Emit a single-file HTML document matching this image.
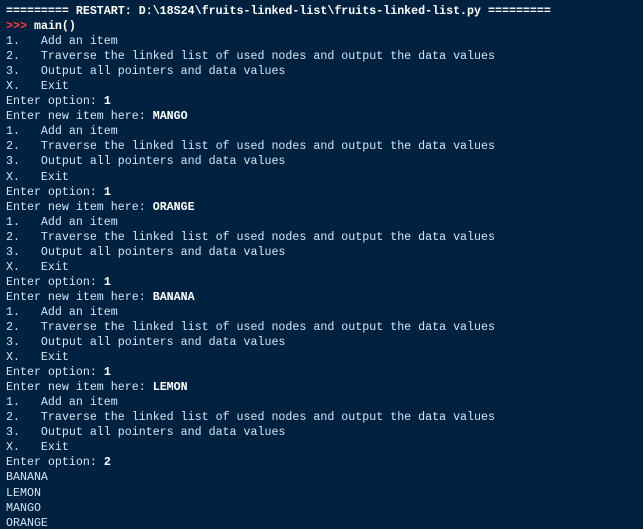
<!DOCTYPE html>
<html><head><style>
html,body{margin:0;padding:0;background:#002240;width:643px;height:529px;overflow:hidden}
pre{margin:0;padding:4px 0 0 6px;font-family:"Liberation Mono",monospace;font-size:11.65px;line-height:15.05px;color:#d4e4f7;white-space:pre}
b{color:#fff;font-weight:bold}
.p{color:#ff3b3b;font-weight:bold}
</style></head><body><pre><b>========= RESTART: D:\18S24\fruits-linked-list\fruits-linked-list.py =========</b>
<span class="p">&gt;&gt;&gt;</span> <b>main()</b>
1.   Add an item
2.   Traverse the linked list of used nodes and output the data values
3.   Output all pointers and data values
X.   Exit
Enter option: <b>1</b>
Enter new item here: <b>MANGO</b>
1.   Add an item
2.   Traverse the linked list of used nodes and output the data values
3.   Output all pointers and data values
X.   Exit
Enter option: <b>1</b>
Enter new item here: <b>ORANGE</b>
1.   Add an item
2.   Traverse the linked list of used nodes and output the data values
3.   Output all pointers and data values
X.   Exit
Enter option: <b>1</b>
Enter new item here: <b>BANANA</b>
1.   Add an item
2.   Traverse the linked list of used nodes and output the data values
3.   Output all pointers and data values
X.   Exit
Enter option: <b>1</b>
Enter new item here: <b>LEMON</b>
1.   Add an item
2.   Traverse the linked list of used nodes and output the data values
3.   Output all pointers and data values
X.   Exit
Enter option: <b>2</b>
BANANA
LEMON
MANGO
ORANGE</pre></body></html>
